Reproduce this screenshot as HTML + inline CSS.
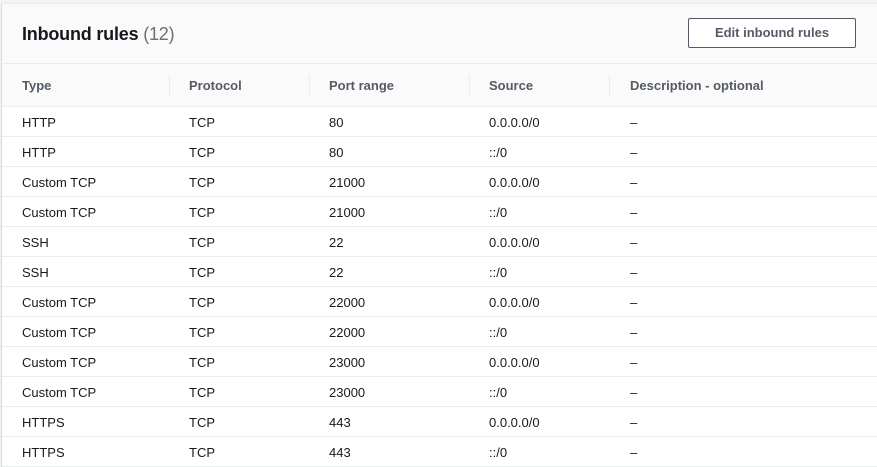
<!DOCTYPE html>
<html><head><meta charset="utf-8"><style>
*{box-sizing:border-box;margin:0;padding:0}
body{width:877px;height:467px;overflow:hidden;background:#f2f3f3;font-family:"Liberation Sans",sans-serif;color:#16191f}
.card{position:absolute;left:1px;top:3px;width:876px;height:464px;background:#fff;border-left:1px solid #d5dbdb;border-top:1px solid #eaeded}
.hdr{height:60px;background:#fafafa;border-bottom:1px solid #eaeded;position:relative}
.hdr h2{position:absolute;left:20px;top:20px;font-size:18px;font-weight:bold;color:#16191f;letter-spacing:-0.2px}
.hdr h2 span{font-weight:normal;color:#687078}
.btn{position:absolute;left:686px;top:14px;width:168px;height:30px;border:1px solid #545b64;border-radius:2px;background:#fff;font-size:13px;font-weight:bold;color:#545b64;text-align:center;line-height:28px}
.th{height:43px;background:#fafafa;border-bottom:1px solid #eaeded;position:relative}
.th div{position:absolute;top:14px;font-size:13px;font-weight:bold;color:#545b64}
.sep{position:absolute;top:11px;height:22px;width:1px;background:#eaeded}
.row{height:30px;border-bottom:1px solid #eaeded;position:relative;font-size:13px}
.row div{position:absolute;top:8px}
.a{left:20px}.b{left:187px}.c{left:327px}.d{left:487px}.e{left:628px}
</style></head><body>
<div class="card">
<div class="hdr"><h2>Inbound rules <span>(12)</span></h2><div class="btn">Edit inbound rules</div></div>
<div class="th"><div style="left:20px">Type</div><span class="sep" style="left:167px"></span><div style="left:187px">Protocol</div><span class="sep" style="left:307px"></span><div style="left:327px">Port range</div><span class="sep" style="left:467px"></span><div style="left:487px">Source</div><span class="sep" style="left:607px"></span><div style="left:628px">Description - optional</div></div>
<div class="row"><div class="a">HTTP</div><div class="b">TCP</div><div class="c">80</div><div class="d">0.0.0.0/0</div><div class="e">–</div></div>
<div class="row"><div class="a">HTTP</div><div class="b">TCP</div><div class="c">80</div><div class="d">::/0</div><div class="e">–</div></div>
<div class="row"><div class="a">Custom TCP</div><div class="b">TCP</div><div class="c">21000</div><div class="d">0.0.0.0/0</div><div class="e">–</div></div>
<div class="row"><div class="a">Custom TCP</div><div class="b">TCP</div><div class="c">21000</div><div class="d">::/0</div><div class="e">–</div></div>
<div class="row"><div class="a">SSH</div><div class="b">TCP</div><div class="c">22</div><div class="d">0.0.0.0/0</div><div class="e">–</div></div>
<div class="row"><div class="a">SSH</div><div class="b">TCP</div><div class="c">22</div><div class="d">::/0</div><div class="e">–</div></div>
<div class="row"><div class="a">Custom TCP</div><div class="b">TCP</div><div class="c">22000</div><div class="d">0.0.0.0/0</div><div class="e">–</div></div>
<div class="row"><div class="a">Custom TCP</div><div class="b">TCP</div><div class="c">22000</div><div class="d">::/0</div><div class="e">–</div></div>
<div class="row"><div class="a">Custom TCP</div><div class="b">TCP</div><div class="c">23000</div><div class="d">0.0.0.0/0</div><div class="e">–</div></div>
<div class="row"><div class="a">Custom TCP</div><div class="b">TCP</div><div class="c">23000</div><div class="d">::/0</div><div class="e">–</div></div>
<div class="row"><div class="a">HTTPS</div><div class="b">TCP</div><div class="c">443</div><div class="d">0.0.0.0/0</div><div class="e">–</div></div>
<div class="row"><div class="a">HTTPS</div><div class="b">TCP</div><div class="c">443</div><div class="d">::/0</div><div class="e">–</div></div>
</div>
</body></html>
